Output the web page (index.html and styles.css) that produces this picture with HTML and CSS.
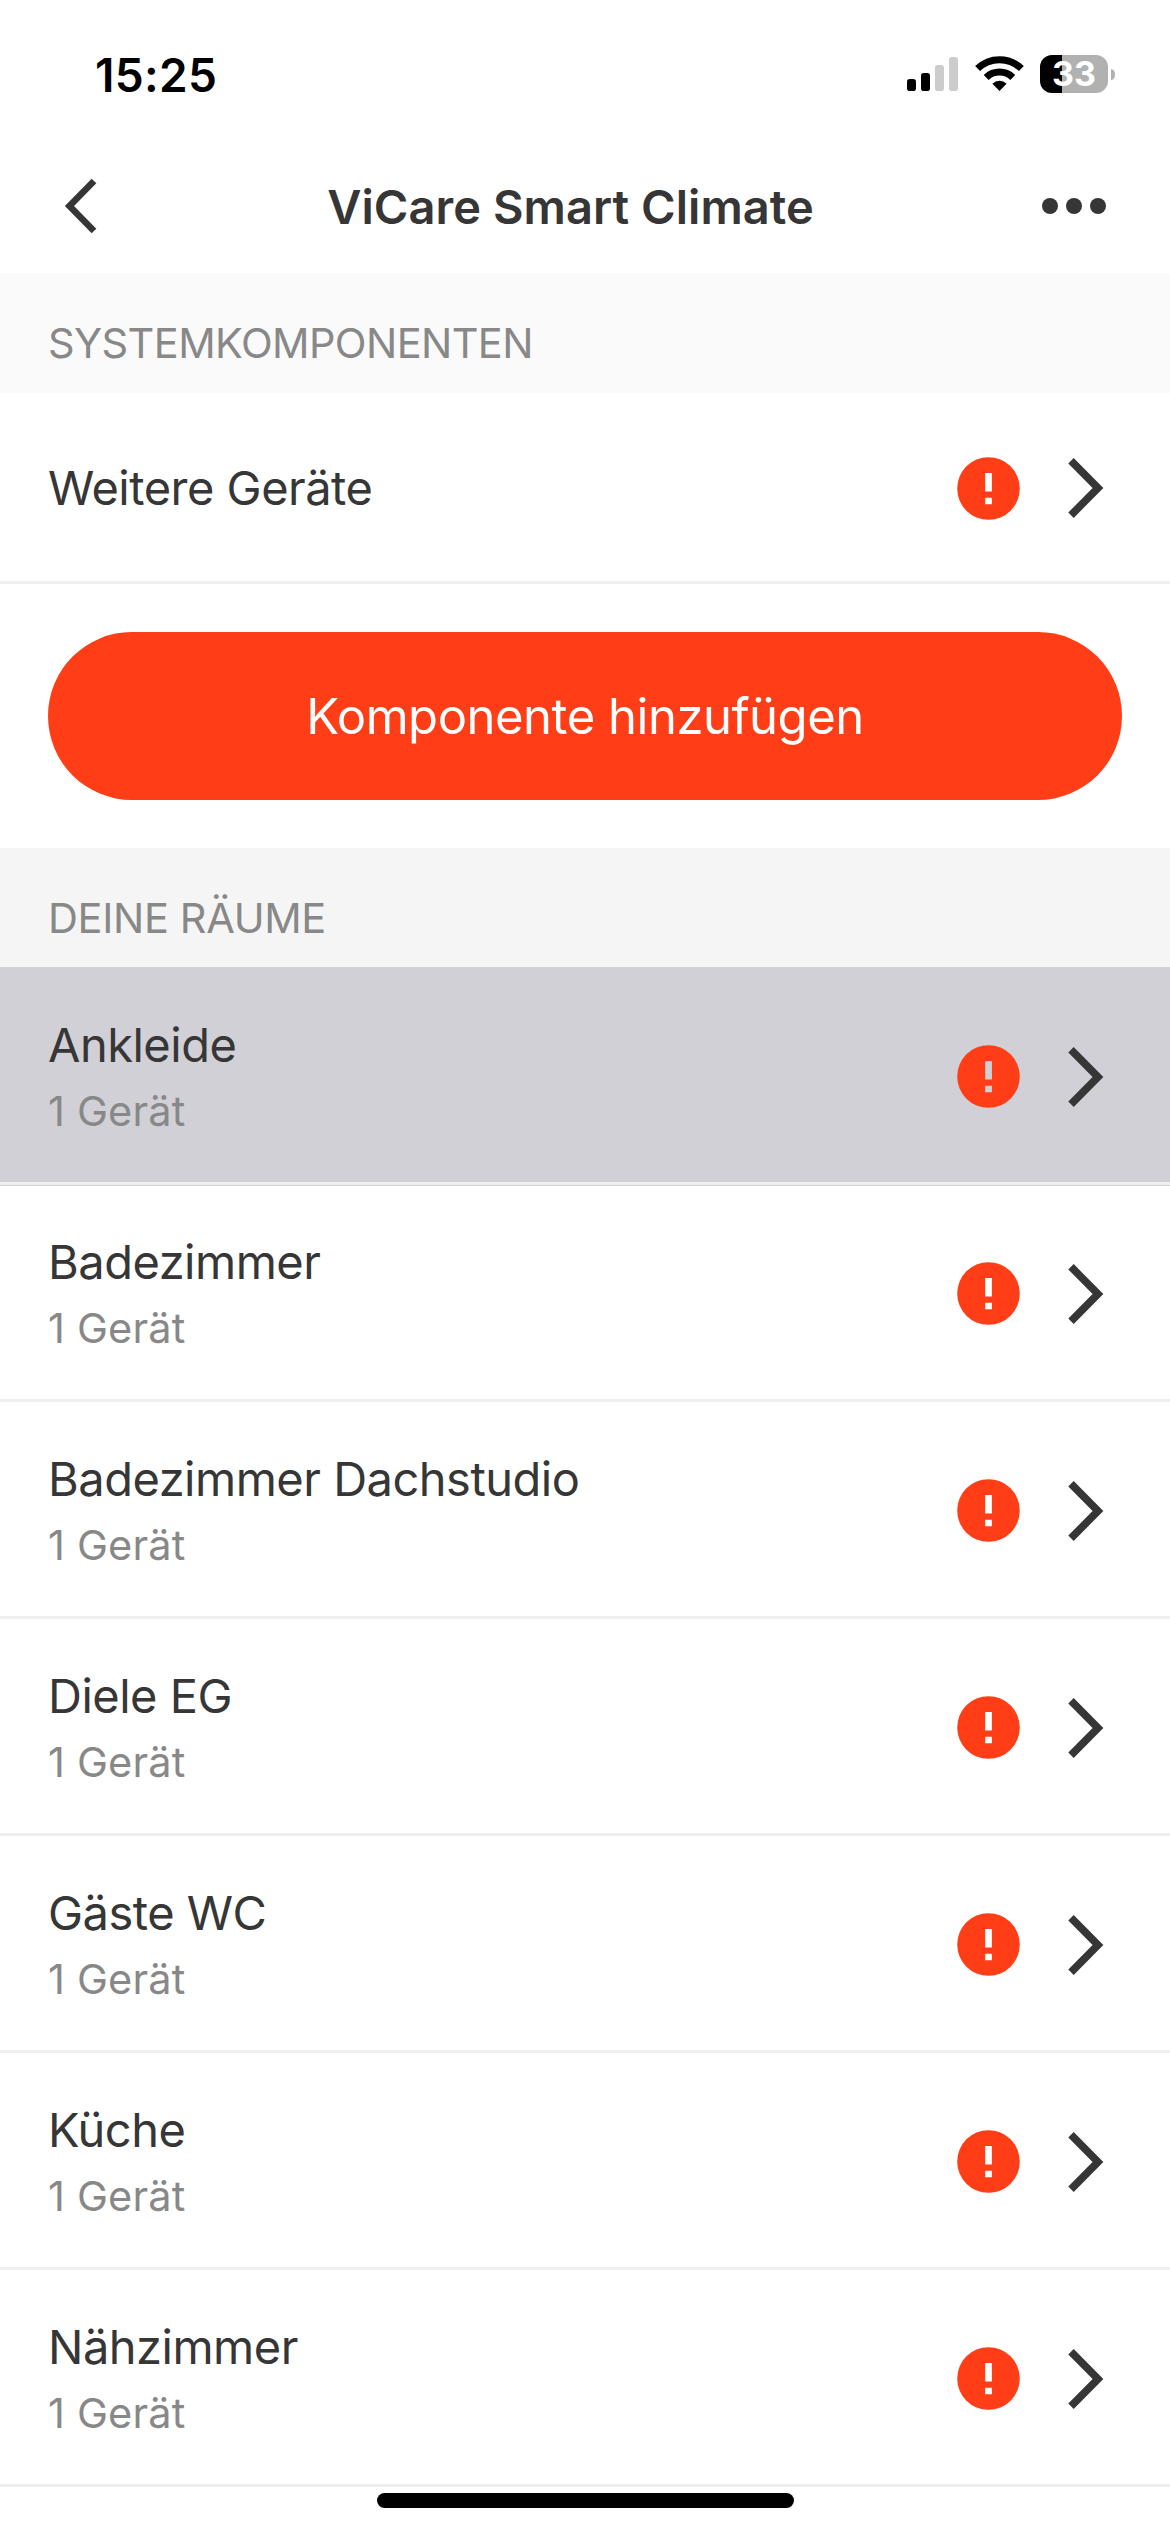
FILE: index.html
```html
<!DOCTYPE html>
<html lang="de">
<head>
<meta charset="utf-8">
<title>ViCare Smart Climate</title>
<link rel="stylesheet" href="styles.css">
</head>
<body>
<svg class="defs" width="0" height="0" aria-hidden="true">
  <symbol id="alert" viewBox="0 0 63 63"><path fill-rule="evenodd" d="M31.500 .2a31.300 31.300 0 1 1 0 62.600a31.300 31.300 0 0 1 0-62.600zM28.200 16v18.600h6.700V16zM28.200 40.700v6.500h6.700v-6.500z"/></symbol>
  <symbol id="chevron" viewBox="0 0 36 62"><path d="M3 3.800L30 31L3 58.200" fill="none" stroke="currentColor" stroke-width="7.600"/></symbol>
</svg>
<div class="screen">
  <header class="status">
    <span class="time">15:25</span>
    <div class="indicators">
      <svg class="signal" width="51" height="34" viewBox="0 0 51 34"><rect y="22" width="9" height="12" rx="2.800"/><rect x="14" y="16" width="9" height="18" rx="2.800"/><g fill="#ccc"><rect x="28" y="8" width="9" height="26" rx="2.800"/><rect x="42" width="9" height="34" rx="2.800"/></g></svg>
      <svg class="wifi" width="49" height="37" viewBox="0 0 49 37"><g fill="none" stroke="#000" stroke-width="7"><path d="M2.600 13.600a31.400 31.400 0 0 1 43.800 0"/><path d="M11.200 22.400a19.200 19.200 0 0 1 26.600 0"/></g><path d="M17.400 28.700a10.300 10.300 0 0 1 14.200 0L24.500 36z"/></svg>
      <div class="battery"><span>33</span></div>
      <i class="nub"></i>
    </div>
  </header>
  <nav class="nav">
    <svg class="back" width="36" height="56" viewBox="0 0 36 56"><path d="M31 3L6.500 28L31 53" fill="none" stroke="currentColor" stroke-width="6.600"/></svg>
    <h1>ViCare Smart Climate</h1>
    <svg class="more" width="64" height="16" viewBox="0 0 64 16" fill="currentColor"><circle cx="8" cy="8" r="8"/><circle cx="32" cy="8" r="8"/><circle cx="56" cy="8" r="8"/></svg>
  </nav>
  <main>
    <h2 class="section light">SYSTEMKOMPONENTEN</h2>
    <div class="row single"><div class="label"><p class="name">Weitere Geräte</p></div><svg class="alert"><use href="#alert"/></svg><svg class="chevron"><use href="#chevron"/></svg></div>
    <div class="action"><button>Komponente hinzufügen</button></div>
    <h2 class="section">DEINE RÄUME</h2>
    <div class="row pressed"><div class="label"><p class="name">Ankleide</p><p class="count">1 Gerät</p></div><svg class="alert"><use href="#alert"/></svg><svg class="chevron"><use href="#chevron"/></svg></div>
    <div class="row"><div class="label"><p class="name">Badezimmer</p><p class="count">1 Gerät</p></div><svg class="alert"><use href="#alert"/></svg><svg class="chevron"><use href="#chevron"/></svg></div>
    <div class="row"><div class="label"><p class="name">Badezimmer Dachstudio</p><p class="count">1 Gerät</p></div><svg class="alert"><use href="#alert"/></svg><svg class="chevron"><use href="#chevron"/></svg></div>
    <div class="row"><div class="label"><p class="name">Diele EG</p><p class="count">1 Gerät</p></div><svg class="alert"><use href="#alert"/></svg><svg class="chevron"><use href="#chevron"/></svg></div>
    <div class="row"><div class="label"><p class="name">Gäste WC</p><p class="count">1 Gerät</p></div><svg class="alert"><use href="#alert"/></svg><svg class="chevron"><use href="#chevron"/></svg></div>
    <div class="row"><div class="label"><p class="name">Küche</p><p class="count">1 Gerät</p></div><svg class="alert"><use href="#alert"/></svg><svg class="chevron"><use href="#chevron"/></svg></div>
    <div class="row"><div class="label"><p class="name">Nähzimmer</p><p class="count">1 Gerät</p></div><svg class="alert"><use href="#alert"/></svg><svg class="chevron"><use href="#chevron"/></svg></div>
  </main>
  <div class="home"></div>
</div>
</body>
</html>
```
FILE: styles.css
```css
* { box-sizing: border-box; margin: 0; padding: 0; }
body { background: #fff; font-family: Inter, "Liberation Sans", sans-serif; color: #363636; }
svg { display: block; flex: none; }
.defs { position: absolute; }
.screen { position: relative; width: 1170px; height: 2532px; overflow: hidden; background: #fff; }

.status { height: 139px; display: flex; justify-content: space-between; align-items: flex-start; padding: 55px 55px 0 95px; color: #000; }
.time { font-size: 46px; font-weight: 600; line-height: 40px; letter-spacing: 0.3px; }
.indicators { display: flex; }
.signal { margin: 2px 17px 0 0; }
.wifi { margin-right: 16px; }
.battery { width: 68px; height: 38px; border-radius: 12px; background: linear-gradient(90deg, #000 22px, #b1b1b1 22px); color: #fff; font-size: 34px; font-weight: 700; line-height: 38px; text-align: center; }
.nub { width: 4px; height: 11px; margin: 14px 0 0 3px; border-radius: 0 4px 4px 0 / 0 5.500px 5.500px 0; background: #b1b1b1; }

.nav { height: 134px; display: flex; align-items: center; justify-content: space-between; padding: 0 64px 0 63px; }
.nav h1 { padding-top: 2px; font-size: 47px; font-weight: 600; line-height: 56px; letter-spacing: 0.05px; }

.section { height: 120px; padding: 42px 48px 0; background: #f5f5f5; color: #888; font-size: 41.500px; font-weight: 400; line-height: 56px; letter-spacing: -0.35px; }
.section.light { background: #fafafa; letter-spacing: -0.6px; }

.row { height: 217px; display: flex; align-items: center; padding: 3px 65px 0 48px; border-bottom: 3px solid #efefef; }
.row.single { height: 191px; }
.row.single .name, .row.single .chevron { margin-bottom: 2px; }
.row.pressed { background: #d1d0d6; background-clip: padding-box; box-shadow: 0 -1px #d1d0d6, 0 1px #d1d0d6; }
.label { flex: 1; }
.name { font-size: 47px; line-height: 60px; letter-spacing: -0.5px; }
.count { margin-top: 8px; font-size: 41.500px; line-height: 56px; letter-spacing: 0.2px; color: #888; }
.row:not(.single) .label { padding-top: 1px; }
.alert { width: 63px; height: 63px; fill: #ff3e17; margin-right: 48px; }
.chevron { width: 36px; height: 62px; margin-right: 1px; }

.action { height: 264px; padding: 48px; }
.action button { display: block; width: 100%; height: 168px; border: 0; border-radius: 84px; background: #ff3e17; color: #fff; font: 400 49px/170px Inter, "Liberation Sans", sans-serif; letter-spacing: -0.48px; }

.home { position: absolute; left: 377px; top: 2493px; width: 417px; height: 15px; border-radius: 8px; background: #000; }
```
